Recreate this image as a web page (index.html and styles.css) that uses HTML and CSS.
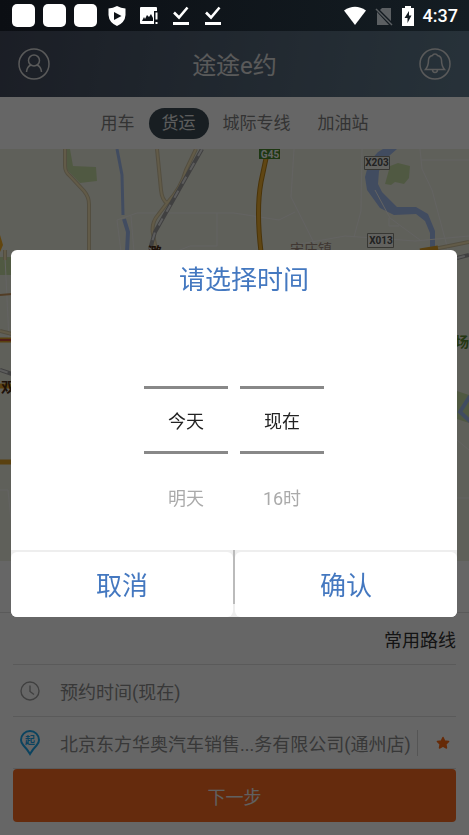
FILE: index.html
```html
<!DOCTYPE html>
<html lang="zh-CN">
<head>
  <meta charset="UTF-8" />
  <meta name="viewport" content="width=device-width, initial-scale=1.0"/>
  <title>途途e约</title>
  <link rel="stylesheet" href="styles.css">
</head>
<body>
  <div class="statusbar">
    <div class="status-left">
      <span class="blank"></span>
      <span class="blank"></span>
      <span class="blank"></span>
      <svg width="24" height="24" viewBox="0 0 24 24"><path fill="#fff" fill-rule="evenodd" d="M12 2 Q8 4 3.500 4.500 V11 Q4 18.500 12 22 Q20 18.500 20.500 11 V4.500 Q16 4 12 2Z M9 8 L16.500 12 L9 16Z"/></svg>
      <svg width="24" height="24" viewBox="0 0 24 24"><path fill="#fff" fill-rule="evenodd" d="M4 3 H19 Q20 3 20 4 V7 H17 V20 H4 Q3 20 3 19 V4 Q3 3 4 3Z M5 17 H16 V14 L14 10 L12 13 L10 11 L8 15 L7 13Z"/><path fill="#fff" d="M18.500 8.500h2v7h-2zM18.500 18h2v2h-2z"/></svg>
      <svg width="24" height="24" viewBox="0 0 24 24"><path fill="none" stroke="#fff" stroke-width="2.600" d="M5 8.500 L10 13.500 L18.500 3.500"/><path fill="#fff" d="M4 18h16v3H4z"/></svg>
      <svg width="24" height="24" viewBox="0 0 24 24"><path fill="none" stroke="#fff" stroke-width="2.600" d="M5 8.500 L10 13.500 L18.500 3.500"/><path fill="#fff" d="M4 18h16v3H4z"/></svg>
    </div>
    <div class="status-right">
      <svg width="24" height="20" viewBox="0 0 24 20"><path fill="#fff" d="M1 4.500 Q12 -3 23 4.500 L12 19Z"/></svg>
      <svg width="18" height="20" viewBox="0 0 18 20"><path fill="#5b5f62" d="M7 2 H16 V15 L5 4Z M2 6 L14 19 H2Z"/><path stroke="#5b5f62" stroke-width="1.500" d="M1 3 L17 19"/></svg>
      <svg width="14" height="20" viewBox="0 0 14 20"><path fill="#fff" fill-rule="evenodd" d="M4 0h6v2h3v18H1V2h3z M8 5 L3.500 12 H6.500 V17 L10.500 9.500 H8Z"/></svg>
      <span class="clock">4:37</span>
    </div>
  </div>

  <header class="header">
    <button class="icon-btn" aria-label="我的">
      <svg width="32" height="32" viewBox="0 0 32 32" fill="none" stroke="#e0e0e0" stroke-width="1.500"><circle cx="16" cy="16" r="15"/><circle cx="16" cy="12.500" r="5.500"/><path d="M8.500 24 Q9 18.500 13 17 M23.500 24 Q23 18.500 19 17"/></svg>
    </button>
    <h1>途途e约</h1>
    <button class="icon-btn" aria-label="消息">
      <svg width="32" height="32" viewBox="0 0 32 32" fill="none" stroke="#e0e0e0" stroke-width="1.500"><circle cx="16" cy="16" r="15"/><path d="M6.500 21.500 Q9.500 18 9.500 12 Q10 8 13.500 7.500 Q14 6 16 6 Q18 6 18.500 7.500 Q22 8 22.500 12 Q22.500 18 25.500 21.500Z M13.500 21.500 Q13.500 24.500 16 24.500 Q18.500 24.500 18.500 21.500"/></svg>
    </button>
  </header>

  <nav class="tabs">
    <a href="#">用车</a>
    <a href="#" class="active">货运</a>
    <a href="#">城际专线</a>
    <a href="#">加油站</a>
  </nav>

  <svg class="map" viewBox="0 149 469 412" preserveAspectRatio="xMidYMin slice" fill="none">
    <!-- parks -->
    <path fill="#c9dfa6" d="M66 149h4l3 17 23 1 1 14-17 2-15-15zM0 257h12v18H0zM385 184l5-18 8-3 12 3-1 12-5 6-9-2-4 3zM457 391l12 4v28l-12-4z"/>
    <!-- water -->
    <path stroke="#a3bdf0" stroke-width="3" d="M117 149 L122 175 L123 215"/>
    <path stroke="#a3bdf0" stroke-width="4" d="M124 219 L128 232 L127 252"/>
    <path fill="#a3bdf0" d="M383 149h14l-8 7-10 15-1 13 4 8 15 15h19l12 7 7 17v16h-5v-14l-5-12-9-7-22 1-14-7-13-18-2-13 4-15 9-10z"/>
    <path stroke="#a3bdf0" stroke-width="4" d="M470 396 L460 412 L471 422"/>
    <!-- small roads -->
    <g stroke="#f8f8f4">
      <path d="M117 220 L137 213 H234 L279 220 L295 212 M117 220 L121 252 M131 216 L134 252 M217 213 V246 H190 L175 252 M294 149 L291 197 L315 245 M362 149 L361 211 L354 237 M255 216 L260 252 M300 244 L345 236 L415 241 L469 236 M375 190 L390 218 L420 240 M389 218 V226 H399 M420 149 L422 169 L432 190 L448 250 M421 160 H469"/>
      <path d="M5 257 L9 340 M0 490 H8 L11 520 M457 440 L469 450 M457 498 H469"/>
    </g>
    <!-- county roads -->
    <g stroke="#d0c4a0" stroke-width="4">
      <path d="M65 149 V166 Q65 172 70 176 L84 191 Q89 197 89 204 V252"/>
      <path d="M157 149 L161 190 Q162 200 167 203"/>
      <path d="M196 149 L186 170 Q181 188 168 202 L158 215 Q151 223 153 234 L156 250"/>
      <path d="M5 250 V260 M0 331 L12 334 M434 249 L469 242"/>
    </g>
    <g stroke="#f5e3b4" stroke-width="2">
      <path d="M65 149 V166 Q65 172 70 176 L84 191 Q89 197 89 204 V252"/>
      <path d="M157 149 L161 190 Q162 200 167 203"/>
      <path d="M196 149 L186 170 Q181 188 168 202 L158 215 Q151 223 153 234 L156 250"/>
      <path d="M5 250 V260 M0 331 L12 334 M434 249 L469 242"/>
    </g>
    <!-- railway -->
    <path stroke="#a0a0a0" stroke-width="4" d="M202 149 L155 232 L150 249 M0 370 L12 374 M457 258 L469 255"/>
    <path stroke="#e6e6e6" stroke-width="2" stroke-dasharray="8 8" d="M202 149 L155 232 L150 249 M0 370 L12 374 M457 258 L469 255"/>
    <!-- highways -->
    <path stroke="#b88218" stroke-width="5" d="M268 149 L261 182 Q256 210 261 252"/>
    <path stroke="#f0b030" stroke-width="3" d="M268 149 L261 182 Q256 210 261 252"/>
    <path stroke="#e0a428" stroke-width="5" d="M0 340 H12 M0 386 H12 M0 462 H12 M420 251 L438 248"/>
    <path stroke="#c84a3a" stroke-width="2" d="M0 340 H12"/>
    <path stroke="#cc9a60" stroke-width="2" d="M0 295 L12 294"/>
    <path fill="#f5ae25" d="M0 235 L3 245 L0 252Z"/>
    <!-- labels -->
    <path fill="#4c8a2e" d="M259 149h21v10h-21z"/>
    <path fill="#f4f4ee" stroke="#8a8a80" d="M364.500 156.500h25v13h-25zM367.500 233.500h26v14h-26z"/>
    <g class="road-no">
      <text x="270" y="158" fill="#fff">G45</text>
      <text x="377" y="166">X203</text>
      <text x="381" y="244">X013</text>
    </g>
    <g class="place">
      <text x="290" y="254">宋庄镇</text>
      <text x="148" y="257" class="strong">潞</text>
      <text x="1" y="392" class="strong">双</text>
      <text x="455" y="347" class="green">场</text>
    </g>
  </svg>

  <main class="panel">
    <div class="spacer"></div>
    <div class="rows">
      <div class="row row-end"><a href="#" class="routes">常用路线</a></div>
      <button class="row">
        <svg width="20" height="20" viewBox="0 0 20 20" fill="none" stroke="#a0a0a0" stroke-width="1.400"><circle cx="10" cy="10" r="9"/><path d="M10 4.500 V10.500 L14 13.500"/></svg>
        <span>预约时间(现在)</span>
      </button>
      <div class="row">
        <svg width="20" height="26" viewBox="0 0 20 26"><path fill="none" stroke="#1ca8ee" stroke-width="2" d="M10 24 Q7 19 3.500 15.500 Q1 13 1 10 A9 9 0 0 1 19 10 Q19 13 16.500 15.500 Q13 19 10 24Z"/><text x="10" y="14" class="pin-text">起</text></svg>
        <span class="address">北京东方华奥汽车销售...务有限公司(通州店)</span>
        <button class="fav" aria-label="收藏">
          <svg width="14" height="14" viewBox="0 0 14 14"><path fill="#ff6a13" stroke="#ff6a13" stroke-width="1.500" stroke-linejoin="round" d="M7 1.500 L8.700 5 L12.600 5.500 L9.800 8.200 L10.500 12 L7 10.200 L3.500 12 L4.200 8.200 L1.400 5.500 L5.300 5Z"/></svg>
        </button>
      </div>
      <button class="next">下一步</button>
    </div>
  </main>

  <div class="overlay">
    <div class="dialog" role="dialog" aria-labelledby="dialogTitle">
      <h2 id="dialogTitle">请选择时间</h2>
      <div class="picker">
        <ul role="listbox" aria-label="日期">
          <li role="option" aria-selected="true">今天</li>
          <li role="option" aria-selected="false">明天</li>
        </ul>
        <ul role="listbox" aria-label="时间">
          <li role="option" aria-selected="true">现在</li>
          <li role="option" aria-selected="false">16时</li>
        </ul>
      </div>
      <div class="actions">
        <button>取消</button>
        <button>确认</button>
      </div>
    </div>
  </div>
</body>
</html>
```

FILE: styles.css
```css
* { box-sizing: border-box; }
body { margin: 0; min-height: 100vh; display: flex; flex-direction: column; font-family: Roboto, "Noto Sans CJK SC", sans-serif; font-size: 18px; background: #fff; }
button { font: inherit; background: none; border: none; padding: 0; cursor: pointer; }
a { color: inherit; text-decoration: none; }
svg { display: block; flex-shrink: 0; }

/* status bar stays above the overlay */
.statusbar { position: relative; z-index: 2; height: 31px; padding: 0 11px 0 12px; display: flex; justify-content: space-between; align-items: center; background: linear-gradient(90deg, #0b0e13, #141d23); }
.status-left { display: flex; align-items: center; gap: 8px; }
.blank { width: 23px; height: 23px; border-radius: 5px; background: #fff; }
.status-right { display: flex; align-items: center; gap: 8px; }
.clock { color: #fff; font-size: 18px; font-weight: 500; }

.header { height: 66px; padding: 0 18px; display: flex; justify-content: space-between; align-items: center; color: #e0e0e0; background: linear-gradient(100deg, #444c5e, #627d90); }
.header h1 { margin: 0; padding-bottom: 2px; font-size: 24px; font-weight: 400; }
.icon-btn { width: 32px; height: 32px; }

.tabs { height: 52px; display: flex; justify-content: center; align-items: center; gap: 1px; font-size: 17px; color: #808080; }
.tabs a { padding: 0 13px; line-height: 31px; border-radius: 16px; }
.tabs .active { background: #3c4c56; color: #e8e8e8; }

.map { flex: 1; min-height: 0; width: 100%; background: #eeefe2; }
.road-no { font-size: 10px; font-weight: 700; fill: #555; text-anchor: middle; }
.place { font-size: 14px; fill: #a08c80; }
.place .strong { fill: #4a2c14; font-weight: 700; }
.place .green { fill: #5c8a30; font-weight: 700; }

.spacer { height: 52px; border-bottom: 1px solid #e2e2e2; }
.rows { padding: 0 13px 13px; }
.row { width: 100%; height: 52px; padding-left: 7px; display: flex; align-items: center; gap: 20px; color: #8c8c8c; border-bottom: 1px solid #e2e2e2; }
.row-end { justify-content: flex-end; color: #333; }
.address { flex: 1; white-space: nowrap; }
.fav { width: 39px; height: 26px; margin-left: -20px; display: flex; justify-content: center; align-items: center; padding-left: 12px; border-left: 1px solid #d4d4d4; }
.pin-text { font-size: 10px; font-weight: 700; fill: #1ca8ee; text-anchor: middle; }
.next { width: 100%; height: 53px; border-radius: 4px; background: #fc6c22; color: #f0f0f0; }

.overlay { position: fixed; inset: 0; padding: 31px 12px 0 11px; display: flex; align-items: center; background: rgba(0,0,0,0.6); }
.dialog { width: 100%; border-radius: 6px; background: #fff; overflow: hidden; }
.dialog h2 { margin: 0; padding: 9px 0 2px 20px; line-height: 42px; font-size: 26px; font-weight: 400; text-align: center; color: #4478c0; }
.picker { display: flex; justify-content: center; gap: 12px; padding: 83px 0 6px; }
.picker ul { list-style: none; width: 84px; margin: 0; padding: 0; text-align: center; color: #222; }
.picker li { line-height: 90px; }
.picker li[aria-selected="true"] { padding-top: 4px; line-height: 58px; border-top: 3px solid #888; border-bottom: 3px solid #888; }
.picker li[aria-selected="false"] { color: #aaa; }
.actions { display: flex; gap: 2px; padding-top: 2px; background: linear-gradient(#bbb, #bbb) center top / 2px 54px no-repeat #eee; }
.actions button { flex: 1; height: 65px; padding-bottom: 2px; border-radius: 6px; background: #fff; color: #4478c0; font-size: 26px; }
```
